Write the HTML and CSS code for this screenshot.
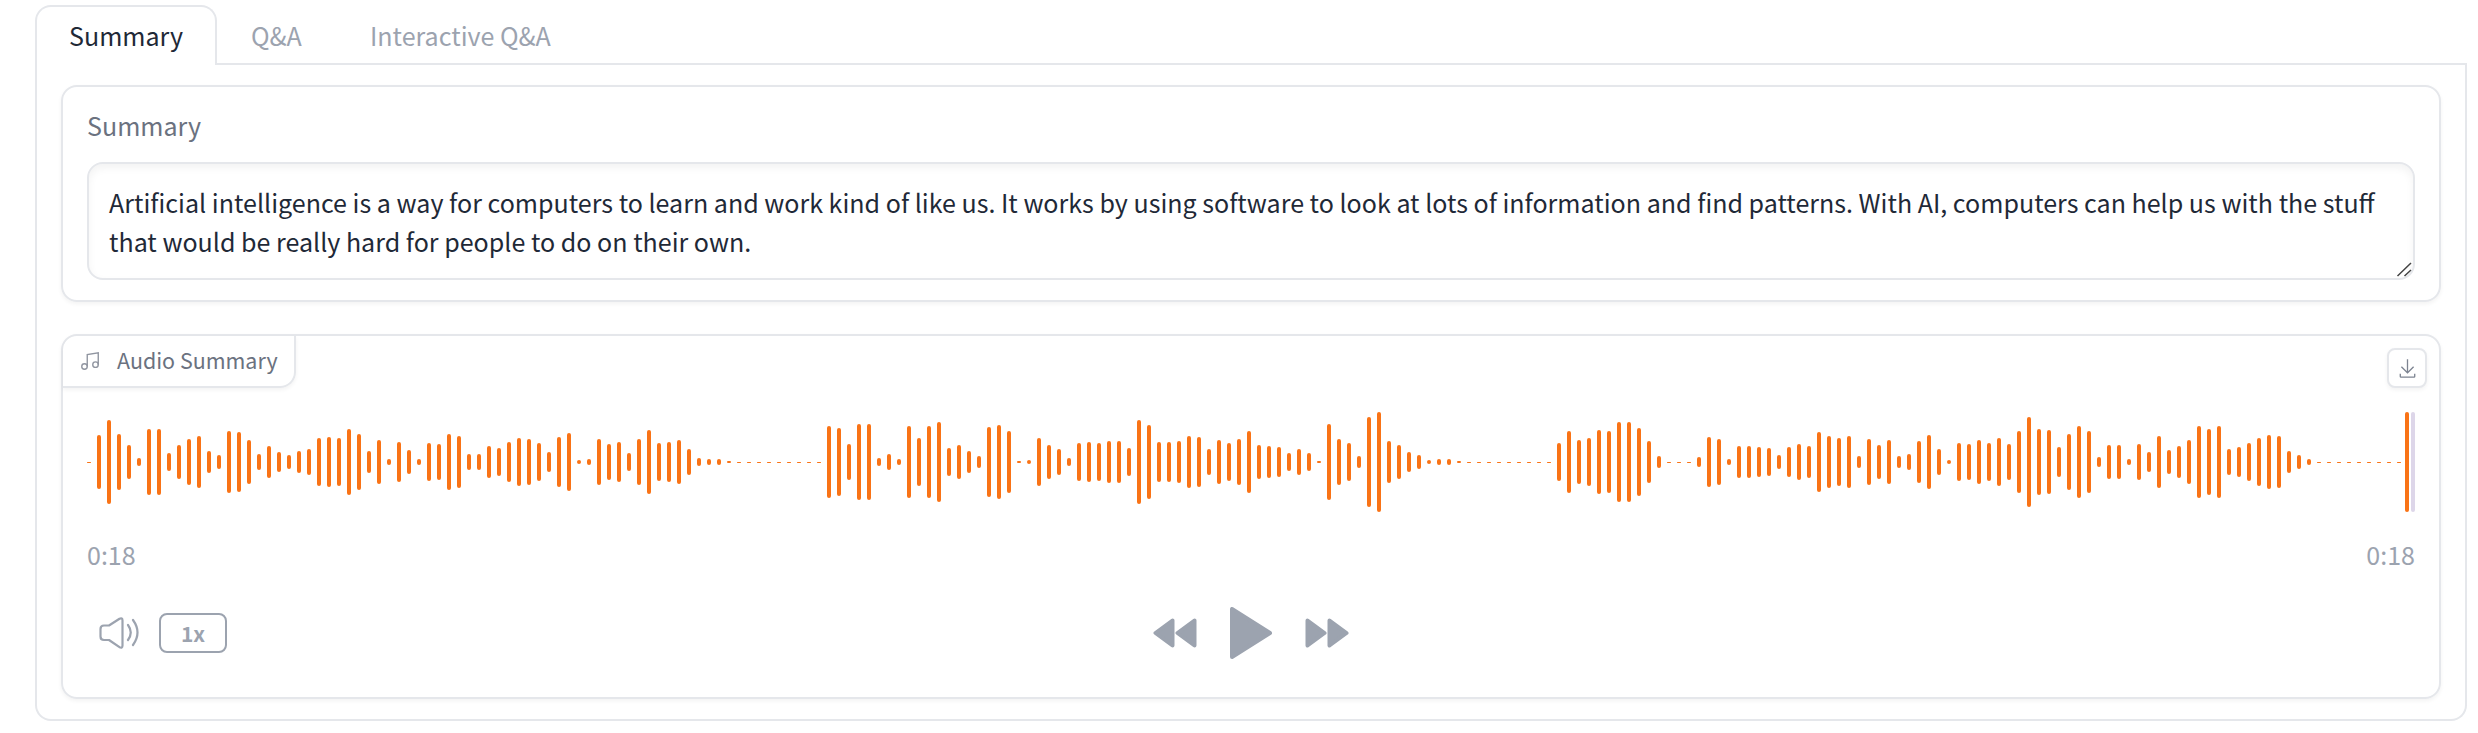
FILE: index.html
```html
<!DOCTYPE html>
<html lang="en">
<head>
<meta charset="utf-8">
<title>Summary</title>
<link rel="stylesheet" href="styles.css">
</head>
<body>
<main class="tabs">
  <nav class="tab-nav">
    <button class="tab tab-active">Summary</button>
    <button class="tab tab-qa">Q&amp;A</button>
    <button class="tab tab-interactive">Interactive Q&amp;A</button>
    <span class="tab-rule"></span>
  </nav>
  <section class="panel">
    <div class="card text-card">
      <div class="label">Summary</div>
      <div class="field">Artificial intelligence is a way for computers to learn and work kind of like us. It works by using software to look at lots of information and find patterns. With AI, computers can help us with the stuff<br>that would be really hard for people to do on their own.
        <svg class="grip" viewBox="0 0 16 16"><path d="M1.500 15 15 2M8.500 15 15 9" /></svg>
      </div>
    </div>
    <div class="card audio-card">
      <div class="audio-head">
        <div class="chip">
          <svg class="music" viewBox="0 0 24 24"><path d="M9 18V5l12-2v13"/><circle cx="6" cy="18" r="3"/><circle cx="18" cy="16" r="3"/></svg>
          <span>Audio Summary</span>
        </div>
        <button class="download"><svg viewBox="0 0 32 32"><path d="M26 24v4H6v-4H4v4a2 2 0 0 0 2 2h20a2 2 0 0 0 2-2v-4zm0-10-1.41-1.41L17 20.17V2h-2v18.17l-7.59-7.58L6 14l10 10 10-10z"/></svg></button>
      </div>
      <div class="wave" id="wave"></div>
      <div class="times"><span>0:18</span><span>0:18</span></div>
      <div class="controls">
        <div class="left">
          <svg class="volume" viewBox="0 0 40 32"><path d="M1.500 12q0-3.500 3.500-3.500h5L20.500 1.800Q23.500 0.500 23.500 3.500v25q0 3-3 1.700L10 23H5q-3.500 0-3.500-3.500zM29 8q5.500 7.500 0 15M34 3q9 12.500 0 25"/></svg>
          <button class="speed">1x</button>
        </div>
        <div class="center">
          <svg class="skip" viewBox="0 0 44 30"><path d="M2.500 15 19.500 2.500v25zM24.500 15 41.500 2.500v25z"/></svg>
          <svg class="play" viewBox="0 0 42 52"><path d="M2 2v48L40 26z"/></svg>
          <svg class="skip" viewBox="0 0 44 30"><path d="M2.500 2.500 19.500 15l-17 12.500zM24.500 2.500 41.500 15l-17 12.500z"/></svg>
        </div>
      </div>
    </div>
  </section>
</main>
<script src="wave.js"></script>
</body>
</html>
```
FILE: styles.css
```css
* { box-sizing: border-box; }
body { margin: 0; background: #fff; font-family: "Noto Sans CJK JP", "Noto Sans", sans-serif; font-size: 25.05px; line-height: 39px; color: #1f2937; }
button { margin: 0; padding: 0; font: inherit; background: #fff; }
svg { display: block; flex: none; }
.tabs { width: 2432px; margin: 5px 0 0 35px; }
.tab-nav { display: flex; height: 60px; }
.tab { border: 0; border-bottom: 2px solid #e5e7eb; color: #9ca3af; white-space: nowrap; text-align: left; padding-top: 2px; }
.tab-active { width: 182px; border: 2px solid #e5e7eb; border-bottom: 0; border-radius: 16px 16px 0 0; color: #1f2937; padding: 0 0 2px 32px; }
.tab-qa { width: 118px; padding-left: 34px; }
.tab-interactive { width: 240px; padding-left: 35px; }
.tab-rule { flex: 1; border-bottom: 2px solid #e5e7eb; }
.panel { height: 656px; border: 2px solid #e5e7eb; border-top: 0; border-radius: 0 0 16px 16px; padding: 20px 24px 0; display: flex; flex-direction: column; gap: 32px; }
.card { border: 2px solid #e5e7eb; border-radius: 16px; box-shadow: 0 2px 4px rgba(0,0,0,.05); }
.text-card { height: 217px; padding: 19px 24px; }
.label { height: 39px; color: #6b7280; margin-bottom: 17px; }
.field { position: relative; height: 118px; border: 2px solid #e5e7eb; border-radius: 16px; padding: 19px 20px; white-space: nowrap; box-shadow: inset 0 4px 8px rgba(0,0,0,.05); }
.grip { position: absolute; right: 1px; bottom: 1px; width: 16px; height: 16px; fill: none; stroke: #444; stroke-width: 1.5; }
.audio-card { height: 365px; }
.audio-head { display: flex; justify-content: space-between; height: 76px; }
.chip { display: flex; align-items: center; width: 233px; height: 52px; border: solid #e5e7eb; border-width: 0 2px 2px 0; border-radius: 14px 0 16px 0; box-shadow: 0 2px 4px rgba(0,0,0,.05); padding-left: 16px; gap: 16px; font-size: 21.45px; color: #6b7280; white-space: nowrap; }
.chip span { padding-bottom: 3px; }
.music { width: 22px; height: 22px; fill: none; stroke: #9095a0; stroke-width: 1.5; }
.download { width: 40px; height: 40px; margin: 12px 12px 0 0; border: 2px solid #e5e7eb; border-radius: 8px; box-shadow: 0 2px 4px rgba(0,0,0,.05); display: grid; place-items: center; }
.download svg { width: 21px; height: 21px; fill: #7d8491; }
.wave { display: flex; align-items: center; gap: 6px; height: 100px; margin: 0 24px; }
.bar { flex: none; width: 4px; border-radius: 2px; background: #f97316; }
.bar-end { margin-left: -2px; }
.cursor { margin-left: -4px; background: #ddd6e9; }
.times { display: flex; justify-content: space-between; margin: 23px 24px 0; height: 39px; color: #9ca3af; }
.controls { display: grid; grid-template-columns: 1fr 196px 1fr; align-items: center; margin: 31px 24px 0; height: 56px; }
.left { display: flex; align-items: center; gap: 20px; padding-left: 12px; }
.volume { width: 40px; height: 32px; fill: none; stroke: #9ca3af; stroke-width: 2.2; stroke-linecap: round; stroke-linejoin: round; }
.speed { width: 68px; height: 40px; border: 2px solid #9ca3af; border-radius: 8px; color: #9ca3af; font-size: 21px; font-weight: 700; line-height: 34px; }
.center { display: flex; align-items: center; justify-content: space-between; }
.skip, .play { fill: #9ca3af; stroke: #9ca3af; stroke-width: 4; stroke-linejoin: round; }
.skip { width: 44px; height: 30px; }
.play { width: 42px; height: 52px; }
```
FILE: wave.js
```js
const heights = [
  1,54,84,56,34,8,66,66,18,34,46,52,22,14,62,60,44,16,32,20,14,22,26,48,50,48,66,56,22,44,6,40,24,6,38,36,56,52,16,16,32,28,40,48,46,38,20,50,58,
  4,6,46,36,40,18,46,64,38,40,44,26,8,6,6,2,1,1,1,1,1,1,1,1,1,72,68,36,76,76,8,16,6,72,48,72,80,28,34,22,12,70,74,62,2,4,48,34,26,
  8,38,40,38,42,42,28,84,74,40,40,42,52,50,26,44,38,46,62,34,32,30,18,26,18,2,76,46,38,12,90,100,42,34,20,14,4,6,6,2,1,1,1,1,1,1,1,1,1,
  38,62,44,48,64,62,80,80,68,42,12,1,1,1,10,50,46,6,32,32,30,28,14,30,36,32,60,52,48,52,12,46,34,44,12,16,42,54,26,4,38,36,44,38,48,36,62,90,66,
  64,30,56,72,62,10,34,34,6,36,20,52,24,32,44,72,66,72,26,30,38,48,54,52,22,14,6,1,1,1,1,1,1,1,1,1
];
const wave = document.getElementById("wave");
function addBar(height, extra) {
  const bar = document.createElement("span");
  bar.className = extra ? "bar " + extra : "bar";
  bar.style.height = height + "px";
  wave.append(bar);
}
heights.forEach((h) => addBar(h));
addBar(100, "bar-end");
addBar(100, "cursor");
```
